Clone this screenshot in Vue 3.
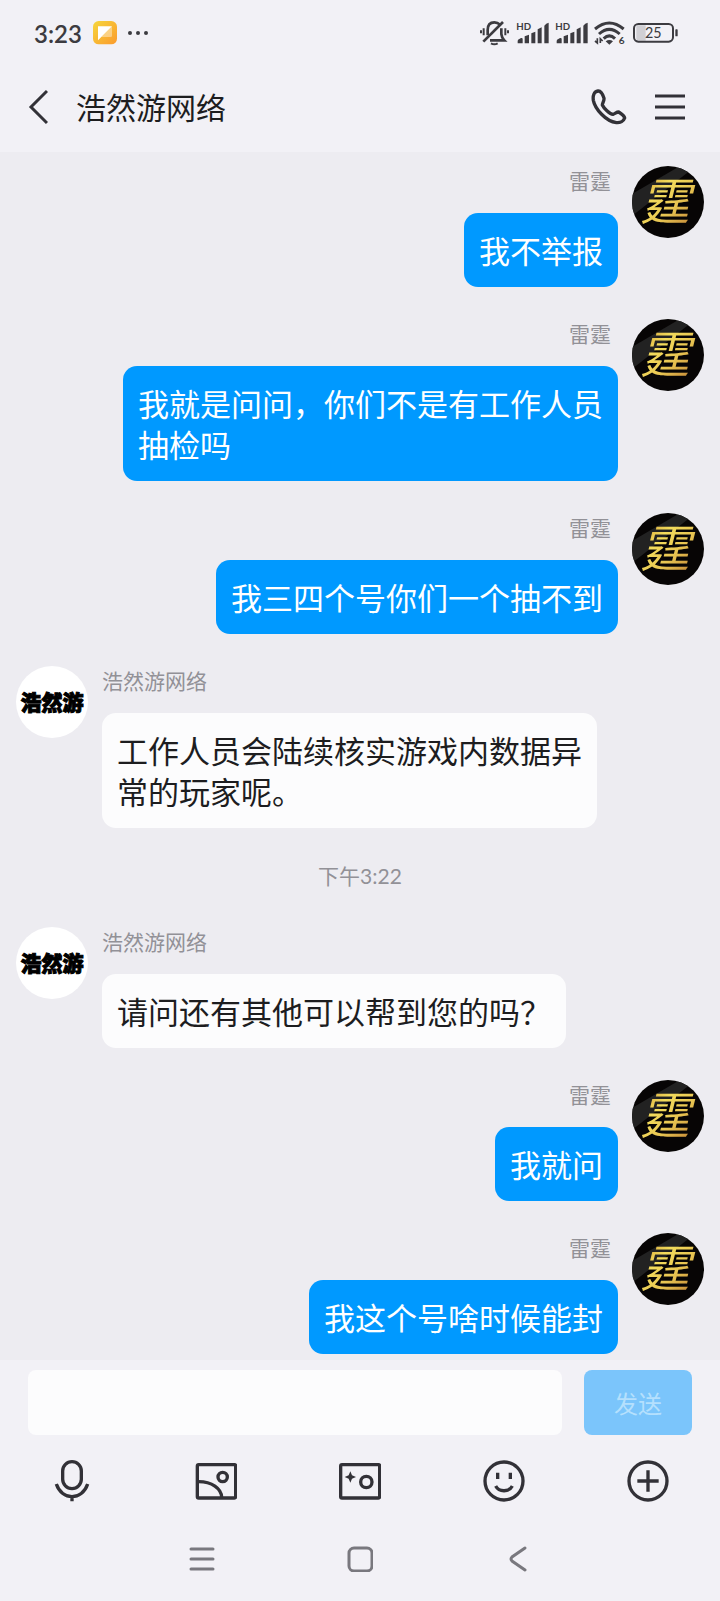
<script setup>
import { ref } from 'vue';

const texto = ref('');

const mensajes = [
    { id: 1, tipo: 'mio', nombre: '雷霆', texto: '我不举报' },
    { id: 2, tipo: 'mio', nombre: '雷霆', texto: '我就是问问，你们不是有工作人员抽检吗' },
    { id: 3, tipo: 'mio', nombre: '雷霆', texto: '我三四个号你们一个抽不到' },
    { id: 4, tipo: 'otro', nombre: '浩然游网络', texto: '工作人员会陆续核实游戏内数据异常的玩家呢。' },
    { id: 5, tipo: 'hora', texto: '下午3:22' },
    { id: 6, tipo: 'otro', nombre: '浩然游网络', texto: '请问还有其他可以帮到您的吗？' },
    { id: 7, tipo: 'mio', nombre: '雷霆', texto: '我就问' },
    { id: 8, tipo: 'mio', nombre: '雷霆', texto: '我这个号啥时候能封' }
];
</script>

<template>
    <div class="pantalla_chat">
        <div class="barra_estado">
            <span class="reloj">3:23</span>
            <svg class="icono_app" width="24" height="24" viewBox="0 0 72 72">
                <defs>
                    <linearGradient id="naranja" x1="0" y1="0" x2="1" y2="1">
                        <stop offset="0" stop-color="#f6d63c" />
                        <stop offset="1" stop-color="#fb9a2c" />
                    </linearGradient>
                </defs>
                <rect width="72" height="70" rx="17" fill="url(#naranja)" />
                <path d="M15 16H57L15 58Z" fill="#fff" />
                <path d="M57 16V44Q57 48 53 48H25Z" fill="#fff" opacity="0.4" />
            </svg>
            <svg width="20" height="6" viewBox="0 0 20 6" fill="#3c3b40">
                <circle cx="2" cy="3" r="2" />
                <circle cx="10" cy="3" r="2" />
                <circle cx="18" cy="3" r="2" />
            </svg>
            <div class="iconos_estado">
                <svg width="31" height="26" viewBox="0 0 93 78" fill="none" stroke="#3c3b40" stroke-width="6">
                    <path d="M3 31V40M11 25V46M76 25V46M84 31V40" />
                    <path d="M23 46V30C23 14 32 7 43 7C50 7 56 10 60 14M64 25V42C65 52 68 56 73 61H30" stroke-width="8" />
                    <path d="M10 65L69 6" stroke-width="8" />
                    <path d="M33 70Q43 76 53 70" stroke-width="6" />
                </svg>
                <svg v-for="n in 2" :key="n" width="34" height="30" viewBox="0 0 102 90" fill="#3c3b40">
                    <text x="1" y="35" font-size="29" font-weight="700">HD</text>
                    <path d="M5 76V69Q5 65 10 63L15 60Q20 59 20 63V76Z" />
                    <path d="M26 76V55L39 50V76ZM46 76V46L58 41V76ZM65 76V34L77 28V76ZM85 76V23Q90 16 98 14V76Z" />
                </svg>
                <svg width="32" height="24" viewBox="0 0 96 72" fill="none" stroke="#3c3b40" stroke-width="9">
                    <path d="M3 24Q46 -12 89 24" />
                    <path d="M15 39Q46 11 77 39" />
                    <path d="M29 53Q46 36 63 53" />
                    <path d="M35 61Q46 53 57 61L46 71Z" fill="#3c3b40" stroke="none" />
                    <path d="M10 52V66L3 60M19 66V53L26 60" stroke-width="5" />
                    <text x="74" y="70" font-size="30" font-weight="700" fill="#3c3b40" stroke="none">6</text>
                </svg>
                <svg width="48" height="22" viewBox="0 0 144 66">
                    <path d="M20 10H44V56H20Q16 56 16 50V16Q16 10 20 10Z" fill="#d0cfd4" />
                    <rect x="9" y="6" width="117" height="53" rx="13" fill="none" stroke="#3c3b40" stroke-width="6" />
                    <rect x="133" y="22" width="7" height="21" rx="2" fill="#3c3b40" />
                    <text x="67" y="48" font-size="43" text-anchor="middle" fill="#3c3b40">25</text>
                </svg>
            </div>
        </div>

        <header class="cabecera">
            <button class="btn_icono" type="button" aria-label="返回">
                <svg width="20" height="36" viewBox="0 0 20 36">
                    <path d="M19 2L3 18L19 34" fill="none" stroke="#323137" stroke-width="3" />
                </svg>
            </button>
            <h1>浩然游网络</h1>
            <button class="btn_icono" type="button" aria-label="电话">
                <svg width="36" height="36" viewBox="0 0 108 108">
                    <path d="M21 6C9 8 5 20 7 34C12 60 45 97 76 101C88 102 98 96 101 87C100 80 94 76 83 69C76 69 73 74 66 76C56 75 38 57 34 48C34 41 40 37 39 28C36 18 30 5 21 6Z" fill="none" stroke="#323137" stroke-width="10" stroke-linejoin="round" />
                </svg>
            </button>
            <button class="btn_icono" type="button" aria-label="菜单">
                <svg width="30" height="26" viewBox="0 0 30 26">
                    <path d="M0 2H30M0 13H30M0 24H30" stroke="#323137" stroke-width="3" />
                </svg>
            </button>
        </header>

        <main class="chat">
            <template v-for="m in mensajes" :key="m.id">
                <p v-if="m.tipo === 'hora'" class="hora">{{ m.texto }}</p>
                <div v-else class="mensaje" :class="m.tipo">
                    <div class="avatar">
                        <svg v-if="m.tipo === 'mio'" width="72" height="72" viewBox="0 0 72 72">
                            <defs>
                                <linearGradient id="dorado" x1="0" y1="0" x2="1" y2="1">
                                    <stop offset="0" stop-color="#c98a2a" />
                                    <stop offset="0.35" stop-color="#f3dc5c" />
                                    <stop offset="0.6" stop-color="#e8c552" />
                                    <stop offset="1" stop-color="#b8742e" />
                                </linearGradient>
                            </defs>
                            <rect width="72" height="72" fill="#070505" />
                            <path d="M0 28L48 0H64L0 50Z" fill="#222" />
                            <text class="caligrafia" x="33" y="54" text-anchor="middle" fill="url(#dorado)">霆</text>
                        </svg>
                        <span v-else>浩然游</span>
                    </div>
                    <div class="contenido">
                        <span class="nombre">{{ m.nombre }}</span>
                        <p class="burbuja">{{ m.texto }}</p>
                    </div>
                </div>
            </template>
        </main>

        <footer class="pie">
            <form class="redactar" @submit.prevent="texto = ''">
                <input type="text" v-model="texto" aria-label="消息">
                <button class="btn_enviar" :disabled="!texto">发送</button>
            </form>
            <div class="herramientas">
                <button class="btn_icono" type="button" aria-label="语音">
                    <svg width="42" height="42" viewBox="0 0 126 126">
                        <rect x="35" y="5" width="56" height="81" rx="28" />
                        <path d="M16 72C24 97 44 110 63 110S102 97 110 72M63 110V124" />
                    </svg>
                </button>
                <button class="btn_icono" type="button" aria-label="图片">
                    <svg width="42" height="42" viewBox="0 0 126 126">
                        <rect x="7" y="14" width="115" height="100" rx="4" />
                        <circle cx="83" cy="51" r="14" />
                        <path d="M11 65C50 65 79 85 80 112" />
                    </svg>
                </button>
                <button class="btn_icono" type="button" aria-label="拍照">
                    <svg width="42" height="42" viewBox="0 0 126 126">
                        <rect x="5" y="14" width="117" height="100" rx="4" />
                        <path class="relleno" d="M34 34L39 46L51 51L39 56L34 68L29 56L17 51L29 46Z" />
                        <circle cx="82" cy="66" r="17" />
                    </svg>
                </button>
                <button class="btn_icono" type="button" aria-label="表情">
                    <svg width="42" height="42" viewBox="0 0 126 126">
                        <circle cx="63" cy="63" r="57" />
                        <path d="M44 38V57M82 38V57" />
                        <path d="M38 78C48 97 78 97 88 78" />
                    </svg>
                </button>
                <button class="btn_icono" type="button" aria-label="更多">
                    <svg width="42" height="42" viewBox="0 0 126 126">
                        <circle cx="63" cy="63" r="57" />
                        <path d="M31 63H95M63 31V95" />
                    </svg>
                </button>
            </div>
            <nav class="navegacion">
                <button class="btn_icono" type="button" aria-label="最近任务">
                    <svg width="26" height="26" viewBox="0 0 26 26">
                        <path d="M2 3H24M2 13H24M2 23H24" />
                    </svg>
                </button>
                <button class="btn_icono" type="button" aria-label="主屏幕">
                    <svg width="26" height="26" viewBox="0 0 26 26">
                        <rect x="2" y="2" width="23" height="23" rx="5" />
                    </svg>
                </button>
                <button class="btn_icono" type="button" aria-label="后退">
                    <svg width="26" height="26" viewBox="0 0 26 26">
                        <path d="M20 2L7 11Q5 13 7 15L20 24" />
                    </svg>
                </button>
            </nav>
        </footer>
    </div>
</template>

<style>
    body {
        background-color: #f2f1f6;
    }
</style>

<style scoped>
    .pantalla_chat {
        min-height: 100vh;
        display: flex;
        flex-direction: column;
        background-color: #f2f1f6;
        color: #1d1d1f;
        font-family: Lato, "Noto Sans CJK SC", sans-serif;
    }

    svg {
        display: block;
    }

    h1, p {
        margin: 0;
        font-weight: normal;
    }

    .barra_estado {
        display: flex;
        align-items: center;
        box-sizing: border-box;
        height: 62px;
        padding: 4px 41px 0 34px;
    }

    .reloj {
        font-size: 24px;
        font-weight: 600;
        color: #3c3b40;
    }

    .icono_app {
        margin: 0 11px;
    }

    .iconos_estado {
        display: flex;
        align-items: center;
        gap: 5px;
        margin-left: auto;
    }

    .btn_icono {
        display: flex;
        align-items: center;
        justify-content: center;
        padding: 0;
        border: none;
        background: none;
        cursor: pointer;
    }

    .cabecera {
        display: flex;
        align-items: center;
        gap: 28px;
        height: 90px;
        padding: 0 35px 0 28px;
    }

    .cabecera h1 {
        flex: 1;
        font-size: 30px;
        line-height: 40px;
    }

    .chat {
        flex: 1;
        display: flex;
        flex-direction: column;
        gap: 32px;
        padding: 14px 0 6px;
        background-color: #edecf1;
    }

    .mensaje {
        display: flex;
        align-items: flex-start;
        gap: 14px;
        padding: 0 123px 0 16px;
    }

    .mensaje.mio {
        flex-direction: row-reverse;
        padding: 0 16px 0 123px;
    }

    .avatar {
        display: flex;
        flex-shrink: 0;
        align-items: center;
        justify-content: center;
        width: 72px;
        height: 72px;
        border-radius: 50%;
        overflow: hidden;
        background-color: #fff;
        color: #000;
        font-size: 21px;
        font-weight: 900;
        line-height: 24px;
        -webkit-text-stroke: 1px #000;
    }

    .caligrafia {
        font-size: 50px;
        font-style: italic;
        font-weight: 400;
        -webkit-text-stroke: 0;
    }

    .contenido {
        display: flex;
        flex-direction: column;
        align-items: flex-start;
        gap: 17px;
    }

    .mio .contenido {
        align-items: flex-end;
    }

    .nombre {
        color: #929197;
        font-size: 21px;
        line-height: 30px;
    }

    .mio .nombre {
        padding-right: 7px;
    }

    .burbuja {
        padding: 18px 15px 15px;
        border-radius: 14px;
        background-color: #fcfcfd;
        font-size: 31px;
        line-height: 41px;
    }

    .mio .burbuja {
        background-color: #0099ff;
        color: #fff;
    }

    .hora {
        padding-bottom: 4px;
        color: #929197;
        font-size: 21px;
        line-height: 31px;
        text-align: center;
    }

    .redactar {
        display: flex;
        gap: 22px;
        padding: 10px 28px 0;
    }

    .redactar input {
        flex: 1;
        min-width: 0;
        box-sizing: border-box;
        height: 65px;
        padding: 0 16px;
        border: none;
        border-radius: 8px;
        background-color: #fcfcfd;
        font-family: inherit;
        font-size: 30px;
    }

    .btn_enviar {
        width: 108px;
        padding: 0;
        border: none;
        border-radius: 8px;
        background-color: #0099ff;
        color: #fff;
        font-family: inherit;
        font-size: 24px;
    }

    .btn_enviar:disabled {
        background-color: #7bc5fb;
        color: #b5e0fd;
    }

    .herramientas {
        display: grid;
        grid-template-columns: repeat(5, 1fr);
        height: 92px;
    }

    .herramientas svg {
        fill: none;
        stroke: #323137;
        stroke-width: 10;
    }

    .herramientas .relleno {
        fill: #323137;
        stroke: none;
    }

    .navegacion {
        display: grid;
        grid-template-columns: repeat(3, 1fr);
        height: 64px;
        padding: 0 17% 10px;
    }

    .navegacion svg {
        fill: none;
        stroke: #79787e;
        stroke-width: 3;
        stroke-linecap: round;
    }
</style>
